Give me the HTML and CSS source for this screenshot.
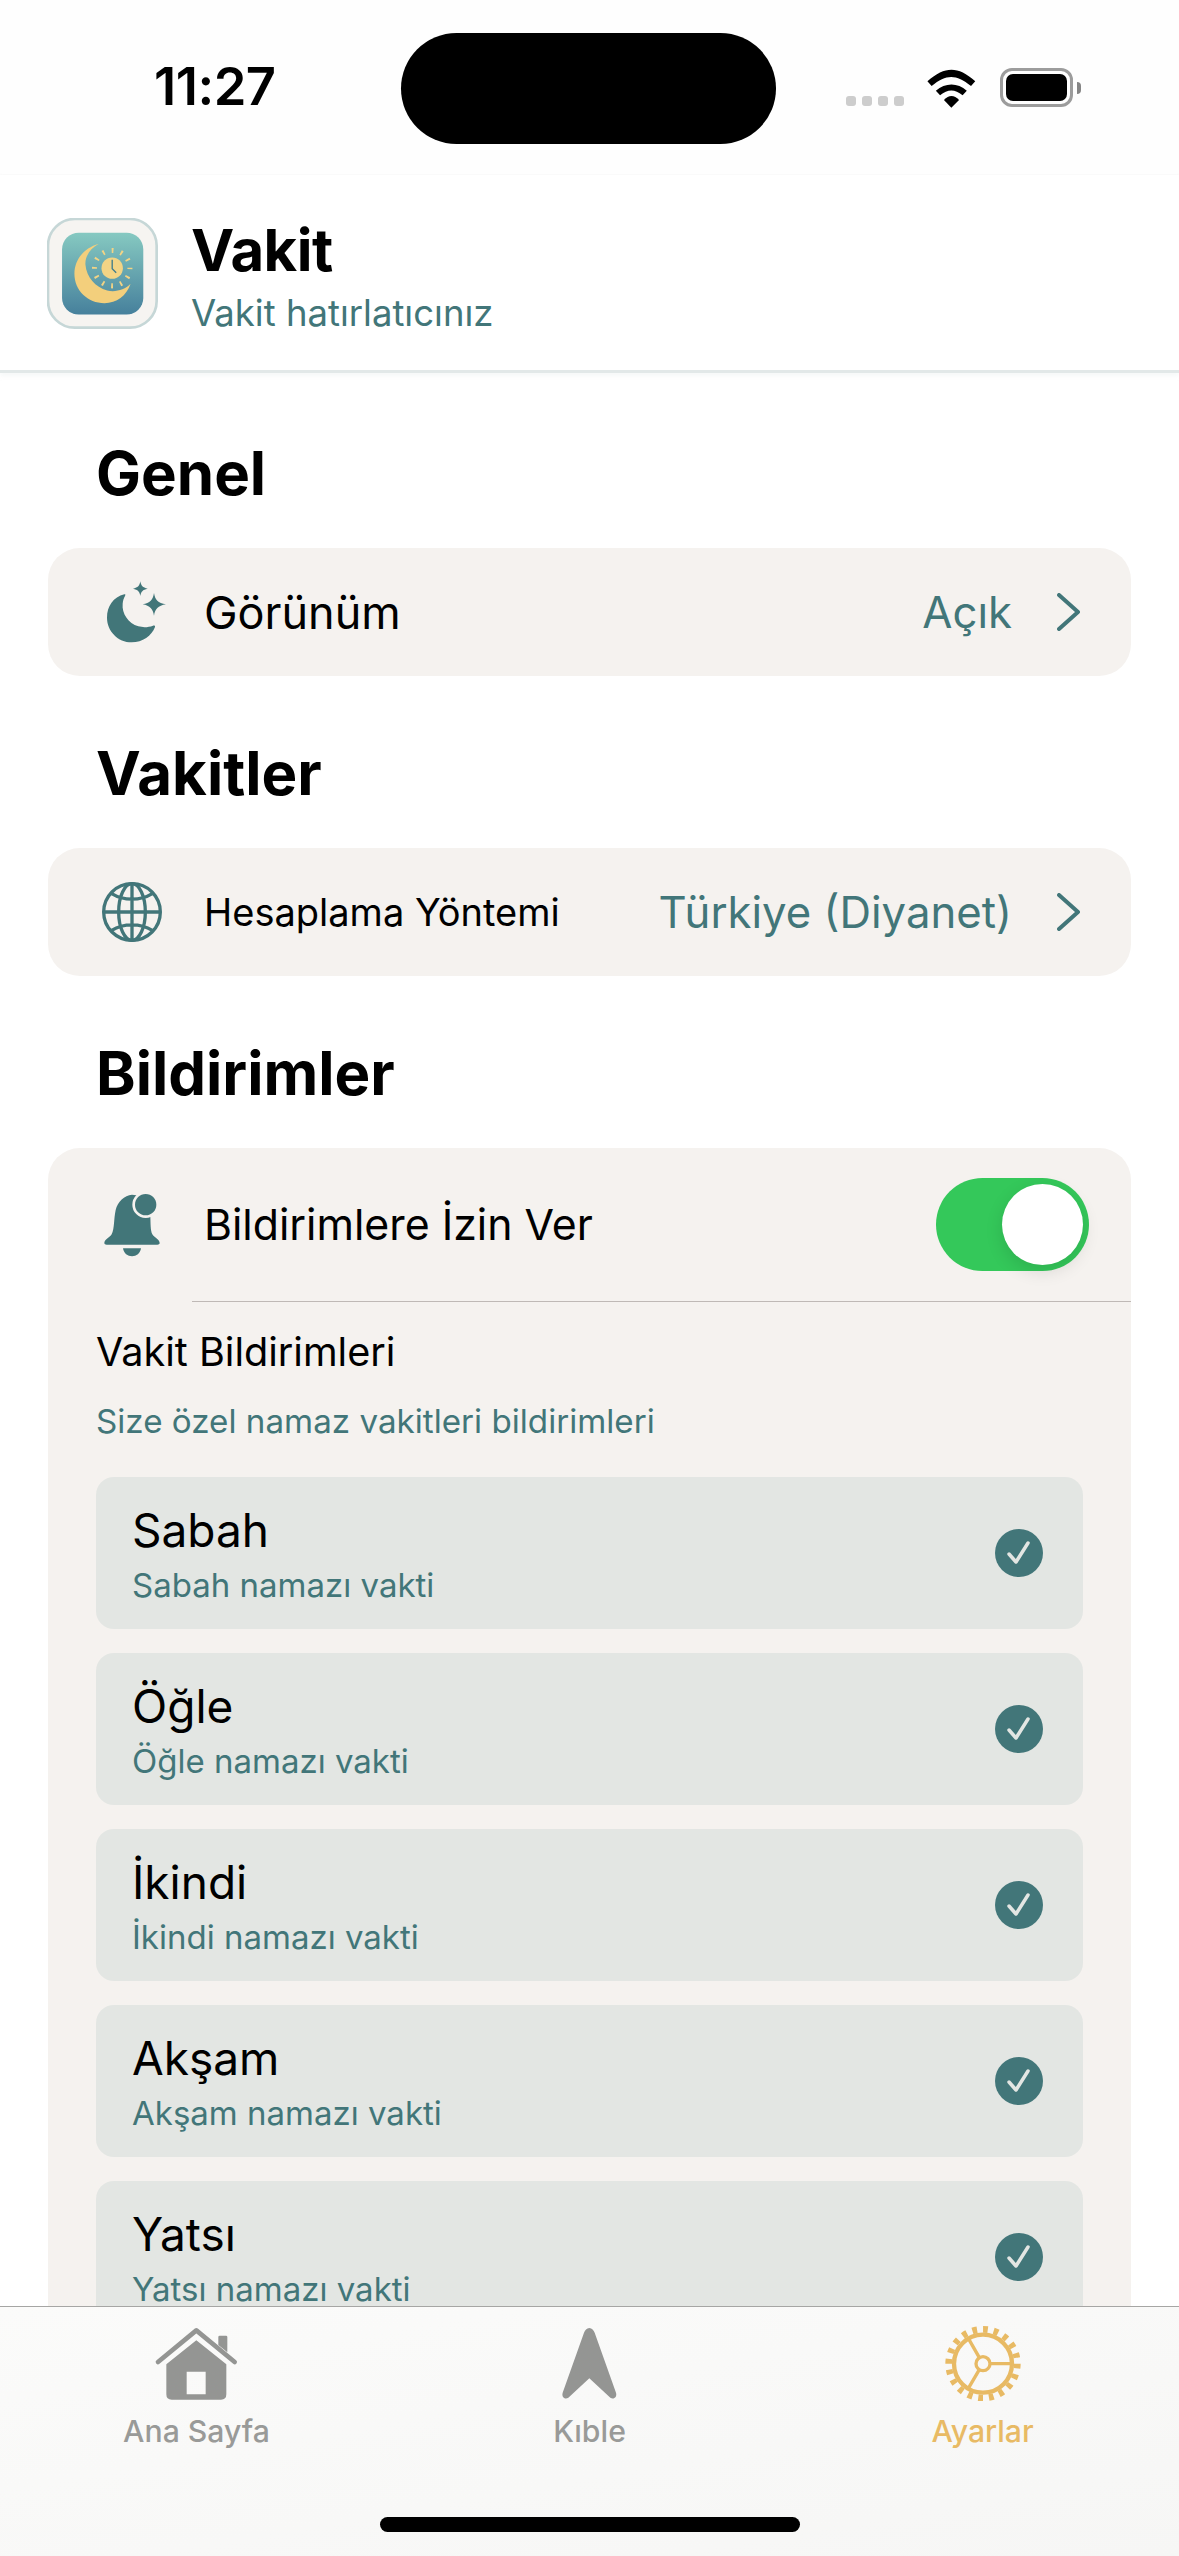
FILE: index.html
```html
<!DOCTYPE html>
<html lang="tr">
<head>
<meta charset="utf-8">
<title>Vakit</title>
<link rel="stylesheet" href="styles.css">
</head>
<body>
<div class="screen">
  <div class="status">
    <span class="time">11:27</span>
    <div class="status-right">
      <div class="dots"><i></i><i></i><i></i><i></i></div>
      <svg class="wifi" viewBox="890 200 145 120" preserveAspectRatio="none"><path d="M894 240C945 194 980 194 1030 240L1018 254C975 218 948 218 906 254Z"/><path d="M918 268C945 243 980 243 1006 268L994 282C972 263 952 263 930 282Z"/><path d="M941 296C955 280 970 280 984 296L962 319Z"/></svg>
      <div class="battery"><div class="battery-fill"></div></div>
      <div class="battery-cap"></div>
    </div>
  </div>
  <div class="island"></div>

  <header class="app-header">
    <svg class="app-icon" viewBox="50 55 335 335">
      <defs><linearGradient id="tile" x1="0" y1="0" x2="0" y2="1"><stop offset="0" stop-color="#86c9c1"/><stop offset="1" stop-color="#46809c"/></linearGradient></defs>
      <rect x="53" y="58" width="325" height="325" rx="80" fill="#f6f4f1" stroke="#c6d7d7" stroke-width="8"/>
      <rect x="95" y="99" width="243" height="245" rx="50" fill="url(#tile)"/>
      <path fill="#f3cf7c" d="M205 132C160 145 132 180 132 222C132 272 172 310 222 310C258 310 288 288 300 252C282 270 255 278 230 272C195 262 168 232 165 195C163 170 180 145 205 132Z"/>
      <circle cx="245" cy="205" r="32" fill="#f3d485"/>
      <circle cx="245" cy="205" r="53" fill="none" stroke="#f3d485" stroke-width="15" pathLength="360" stroke-dasharray="6 24" stroke-dashoffset="3"/>
      <path d="M245 180V207L257 219" fill="none" stroke="#3f7d8c" stroke-width="4"/>
    </svg>
    <div class="app-titles">
      <div class="app-name">Vakit</div>
      <div class="app-sub">Vakit hatırlatıcınız</div>
    </div>
  </header>

  <main class="content">
    <section class="section first">
      <h2 class="section-title">Genel</h2>
      <div class="card">
        <div class="row">
          <svg class="row-icon" viewBox="198 137 216 216"><path class="fill" d="M283 192C250 200 231 228 231 262C231 302 264 336 305 336C338 336 365 316 375 290C376 286 372 285 369 286C355 291 340 292 325 288C295 278 275 250 278 220C279 210 281 204 285 197C287 193 286 191 283 192Z"/><path class="fill" d="M372 188C375 208 384 218 408 222C384 226 375 236 372 256C369 236 360 226 338 222C360 218 369 208 372 188Z"/><path class="fill" d="M331 153C333 166 338 172 353 175C338 178 333 184 331 197C329 184 324 178 309 175C324 172 329 166 331 153Z"/></svg>
          <span class="row-label">Görünüm</span>
          <span class="row-value">Açık</span>
          <svg class="chevron" viewBox="0 0 24 38"><path d="M2 2L21 19L2 36"/></svg>
        </div>
      </div>
    </section>

    <section class="section">
      <h2 class="section-title">Vakitler</h2>
      <div class="card">
        <div class="row">
          <svg class="row-icon" viewBox="197 107 216 216"><g class="line"><circle cx="305" cy="215" r="85"/><ellipse cx="305" cy="215" rx="40" ry="85"/><path d="M305 130V300M220 215H390M244 160C280 182 330 182 366 160M244 270C280 248 330 248 366 270"/></g></svg>
          <span class="row-label small">Hesaplama Yöntemi</span>
          <span class="row-value">Türkiye (Diyanet)</span>
          <svg class="chevron" viewBox="0 0 24 38"><path d="M2 2L21 19L2 36"/></svg>
        </div>
      </div>
    </section>

    <section class="section">
      <h2 class="section-title">Bildirimler</h2>
      <div class="card">
        <div class="row tall">
          <svg class="row-icon" viewBox="197 122 216 216"><path class="fill" d="M305 139C282 141 262 160 256 185C250 212 253 240 244 258C238 268 222 274 222 284C222 287 225 289 229 289H381C385 289 388 287 388 284C388 274 372 268 366 258C360 245 361 225 360 205C358 180 340 139 305 139Z"/><path class="fill" d="M278 300H332C330 315 318 324 305 324C292 324 280 315 278 300Z"/><circle class="bell-dot" cx="346" cy="169" r="36"/></svg>
          <span class="row-label medium">Bildirimlere İzin Ver</span>
          <div class="toggle"><div class="knob"></div></div>
        </div>
        <div class="separator"></div>
        <div class="notif">
          <div class="notif-title">Vakit Bildirimleri</div>
          <div class="notif-sub">Size özel namaz vakitleri bildirimleri</div>
          <div class="prayers">
            <div class="prayer"><div class="prayer-text"><div class="prayer-name">Sabah</div><div class="prayer-sub">Sabah namazı vakti</div></div><svg class="check" viewBox="0 0 48 48"><circle cx="24" cy="24" r="24"/><path d="M14 25L21 33L33 14"/></svg></div>
            <div class="prayer"><div class="prayer-text"><div class="prayer-name">Öğle</div><div class="prayer-sub">Öğle namazı vakti</div></div><svg class="check" viewBox="0 0 48 48"><circle cx="24" cy="24" r="24"/><path d="M14 25L21 33L33 14"/></svg></div>
            <div class="prayer"><div class="prayer-text"><div class="prayer-name">İkindi</div><div class="prayer-sub">İkindi namazı vakti</div></div><svg class="check" viewBox="0 0 48 48"><circle cx="24" cy="24" r="24"/><path d="M14 25L21 33L33 14"/></svg></div>
            <div class="prayer"><div class="prayer-text"><div class="prayer-name">Akşam</div><div class="prayer-sub">Akşam namazı vakti</div></div><svg class="check" viewBox="0 0 48 48"><circle cx="24" cy="24" r="24"/><path d="M14 25L21 33L33 14"/></svg></div>
            <div class="prayer"><div class="prayer-text"><div class="prayer-name">Yatsı</div><div class="prayer-sub">Yatsı namazı vakti</div></div><svg class="check" viewBox="0 0 48 48"><circle cx="24" cy="24" r="24"/><path d="M14 25L21 33L33 14"/></svg></div>
          </div>
        </div>
      </div>
    </section>
  </main>

  <nav class="tabbar">
    <div class="tab">
      <svg class="tab-icon" viewBox="460 225 255 225"><path class="tab-fill" fill-rule="evenodd" d="M497 340L587 268L677 340V430Q677 446 661 446H513Q497 446 497 430ZM558 362V430H615V362Z"/><path class="tab-fill" d="M653 258Q653 254 657 254H676Q680 254 680 258V304L653 282Z"/><path class="tab-stroke" d="M472 333L587 238L702 333"/></svg>
      <span class="tab-label">Ana Sayfa</span>
    </div>
    <div class="tab">
      <svg class="tab-icon" viewBox="470 225 195 225"><path class="tab-fill" d="M567 231C575 231 580 238 583 245L647 425C651 438 640 447 630 440L567 382L504 440C494 447 483 438 487 425L551 245C554 238 559 231 567 231Z"/></svg>
      <span class="tab-label">Kıble</span>
    </div>
    <div class="tab active">
      <svg class="tab-icon" viewBox="172 225 264 225"><g class="gear"><circle class="rim" cx="304" cy="338" r="87"/><circle class="teeth" cx="304" cy="338" r="103" pathLength="360" stroke-dasharray="8 10"/><circle cx="304" cy="338" r="21"/><path d="M325 338H390M293 320L260 262M293 356L260 412"/></g></svg>
      <span class="tab-label">Ayarlar</span>
    </div>
  </nav>
  <div class="home-indicator"></div>
</div>
</body>
</html>
```
FILE: styles.css
```css
* { box-sizing: border-box; }
html, body { margin: 0; padding: 0; background: #fff; }
body { font-family: Inter, "Noto Sans", sans-serif; color: #000; }

.screen { position: relative; width: 1179px; height: 2556px; overflow: hidden; background: #fff; }

/* status bar */
.status { height: 175px; background: #fefefe; border-bottom: 1px solid #fbfbfb; display: flex; justify-content: space-between; padding: 0 98px 0 154px; }
.time { font-size: 52.5px; font-weight: 600; line-height: 60px; margin-top: 56px; letter-spacing: -0.5px; white-space: nowrap; }
.status-right { display: flex; align-items: flex-start; margin-top: 68px; }
.dots { display: flex; gap: 6px; margin-top: 28px; margin-right: 22px; }
.dots i { display: block; width: 10px; height: 10px; border-radius: 3px; background: #cdcdcd; }
.wifi { width: 51px; height: 40px; margin-right: 23px; }
.wifi path { fill: #000; }
.battery { width: 73px; height: 39px; border: 3px solid #9c9c9c; border-radius: 12px; padding: 3px; }
.battery-fill { width: 100%; height: 100%; background: #000; border-radius: 7px; }
.battery-cap { width: 4px; height: 12px; margin-top: 14px; margin-left: 4px; background: #858585; border-radius: 0 6px 6px 0; }
.island { position: absolute; left: 401px; top: 33px; width: 375px; height: 111px; border-radius: 56px; background: #000; }

/* header */
.app-header { height: 198px; display: flex; align-items: center; padding: 0 0 0 47px; gap: 32px; background: #fff; border-bottom: 3px solid #e2e8e8; box-shadow: 0 3px 4px rgba(228, 235, 235, 0.35); position: relative; }
.app-icon { width: 112px; height: 112px; margin-top: 2px; }
.app-titles { padding-top: 5px; }
.app-name { font-size: 58px; font-weight: 700; line-height: 68px; letter-spacing: -0.5px; }
.app-sub { font-size: 36.5px; font-weight: 400; line-height: 42px; color: #427679; margin-top: 8px; }

/* content */
.content { padding: 0 48px; }
.section { margin-top: 61px; }
.section.first { margin-top: 64px; }
.section-title { margin: 0 0 39px 48px; font-size: 60px; font-weight: 700; line-height: 72px; }
.card { background: #f5f2ef; border-radius: 32px; }
.row { height: 128px; display: flex; align-items: center; padding: 0 50px 0 48px; }
.row.tall { height: 153px; padding-right: 42px; }
.row-icon { width: 72px; height: 72px; margin-right: 36px; flex: none; }
.fill { fill: #427679; }
.bell-dot { fill: #427679; stroke: #f5f2ef; stroke-width: 8; }
.line { fill: none; stroke: #427679; stroke-width: 10; }
.row-label { font-size: 45px; flex: 1; white-space: nowrap; }
.row-label.small { font-size: 38px; }
.row-label.medium { font-size: 42.8px; }
.row-value { font-size: 43.7px; color: #427679; white-space: nowrap; }
.chevron { width: 24px; height: 38px; margin-left: 45px; flex: none; }
.chevron path { fill: none; stroke: #427679; stroke-width: 4; stroke-linecap: round; stroke-linejoin: round; }
.toggle { width: 153px; height: 93px; border-radius: 47px; background: #34c85a; padding: 6px; display: flex; justify-content: flex-end; }
.knob { width: 81px; height: 81px; border-radius: 50%; background: #fff; box-shadow: 0 6px 18px rgba(0, 0, 0, 0.12); }
.separator { height: 1px; background: #bfb9b6; margin-left: 144px; }

.notif { padding: 0 48px; }
.notif-title { font-size: 39.6px; line-height: 48px; margin-top: 26px; }
.notif-sub { font-size: 33.2px; line-height: 40px; color: #427679; margin-top: 25px; }
.prayers { display: flex; flex-direction: column; gap: 24px; margin-top: 36px; padding-bottom: 40px; }
.prayer { height: 152px; border-radius: 18px; background: #e3e6e3; display: flex; align-items: center; justify-content: space-between; padding: 0 40px 0 36px; }
.prayer-text { padding-top: 1px; }
.prayer-name { font-size: 46px; line-height: 54px; }
.prayer-sub { font-size: 33px; line-height: 40px; color: #427679; margin-top: 8px; }
.check { width: 48px; height: 48px; flex: none; }
.check circle { fill: #427679; }
.check path { fill: none; stroke: #e3e6e3; stroke-width: 3.5; stroke-linecap: round; stroke-linejoin: round; }

/* tab bar */
.tabbar { position: absolute; left: 0; right: 0; bottom: 0; height: 250px; border-top: 1px solid #a6a6a4; background: linear-gradient(170deg, #fbfbfa 0%, #f6f6f5 100%); display: flex; padding-top: 19px; }
.tab { flex: 1; display: flex; flex-direction: column; align-items: center; color: #999a98; }
.tab.active { color: #e8ba64; }
.tab-icon { height: 75px; width: auto; }
.tab-fill { fill: #949593; }
.tab-stroke { fill: none; stroke: #949593; stroke-width: 14; stroke-linecap: round; stroke-linejoin: round; }
.gear circle, .gear path { fill: none; stroke: #e8ba64; stroke-width: 10; }
.gear .rim { stroke-width: 13; }
.gear .teeth { stroke-width: 20; }
.tab-label { font-size: 30.2px; font-weight: 500; line-height: 36px; margin-top: 12px; }
.home-indicator { position: absolute; left: 380px; top: 2517px; width: 420px; height: 15px; border-radius: 8px; background: #000; }
```
